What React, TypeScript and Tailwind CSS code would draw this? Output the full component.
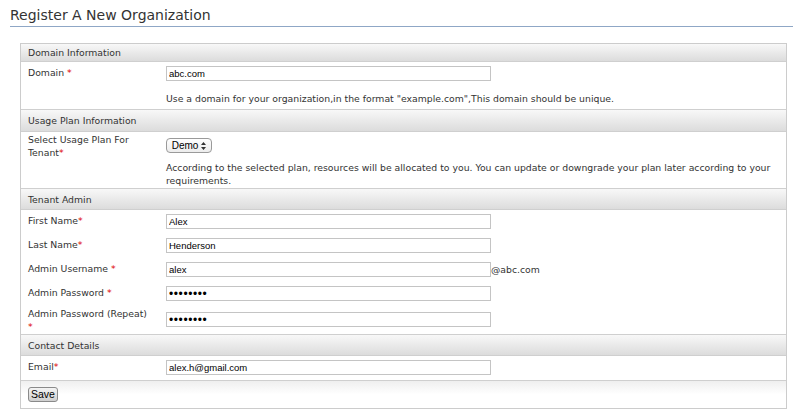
import React from 'react'

const labelFont = "font-['DejaVu_Sans',Verdana,sans-serif] text-[9.3px] leading-[13px] text-[#333]"
const inputCls =
  "block h-[15px] w-[325px] border border-[#c4c4c4] bg-white px-[2px] font-['Liberation_Sans',Arial,sans-serif] text-[9.5px] text-black outline-none"
const pwCls =
  "block h-[15px] w-[325px] border border-[#c4c4c4] bg-white px-[2px] font-['Liberation_Sans',Arial,sans-serif] text-[12px] tracking-[0.6px] text-black outline-none"

function Req() {
  return <span className="text-[#d00]">*</span>
}

function SectionHeader({ title, h }: { title: string; h: string }) {
  return (
    <div
      className={`flex items-center border-b border-[#cfcfcf] bg-gradient-to-b from-[#f8f8f8] to-[#dcdcdc] pl-[7px] ${h} ${labelFont}`}
    >
      {title}
    </div>
  )
}

function Field({ label, value, type = 'text', suffix }: { label: React.ReactNode; value: string; type?: string; suffix?: string }) {
  return (
    <div className="flex items-start">
      <div className={`w-[145px] shrink-0 pl-[7px] ${labelFont}`}>{label}</div>
      <input type={type} defaultValue={value} className={type === 'password' ? pwCls : inputCls} />
      {suffix && <span className={`${labelFont} leading-[15px]`}>{suffix}</span>}
    </div>
  )
}

export default function App() {
  return (
    <div className="h-[418px] w-[798px] overflow-hidden bg-white">
      <div className="ml-[10px] mr-[5px] pt-[6px]">
        <h1 className="border-b border-[#8fa7c6] pb-[1px] font-['DejaVu_Sans',Verdana,sans-serif] text-[14px] leading-[19px] text-[#333]">
          Register A New Organization
        </h1>
      </div>

      <div className="ml-[20px] mt-[16px] w-[767px] border border-[#cccccc]">
        <SectionHeader title="Domain Information" h="h-[18px]" />
        <div className="border-b border-[#cfcfcf] pb-[4px] pt-[4px]">
          <Field label={<>Domain <Req /></>} value="abc.com" />
          <p className={`ml-[145px] mt-[11px] ${labelFont}`}>
            Use a domain for your organization,in the format "example.com",This domain should be unique.
          </p>
        </div>

        <SectionHeader title="Usage Plan Information" h="h-[22px]" />
        <div className="flex border-b border-[#cfcfcf] pb-[1px] pt-[1px]">
          <div className={`w-[145px] shrink-0 pl-[7px] ${labelFont}`}>
            Select Usage Plan For
            <br />
            Tenant<Req />
          </div>
          <div className="pt-[5px]">
            <div className="flex h-[15px] w-[46px] items-center justify-center gap-[3px] rounded-[4px] border border-[#9a9a9a] bg-gradient-to-b from-white to-[#ececec] font-['Liberation_Sans',Arial,sans-serif] text-[10px] text-black">
              Demo
              <svg width="5" height="8" viewBox="0 0 5 8">
                <path d="M2.5 0 L5 3 L0 3 Z M2.5 8 L5 5 L0 5 Z" fill="#333" />
              </svg>
            </div>
            <p className={`mt-[8px] ${labelFont}`}>
              According to the selected plan, resources will be allocated to you. You can update or downgrade your plan later according to your
              <br />
              requirements.
            </p>
          </div>
        </div>

        <SectionHeader title="Tenant Admin" h="h-[21px]" />
        <div className="flex flex-col gap-[9px] border-b border-[#cfcfcf] pb-[1px] pt-[4px]">
          <Field label={<>First Name<Req /></>} value="Alex" />
          <Field label={<>Last Name<Req /></>} value="Henderson" />
          <Field label={<>Admin Username <Req /></>} value="alex" suffix="@abc.com" />
          <Field label={<>Admin Password <Req /></>} value="12345678" type="password" />
          <div className="-mt-[3px] flex items-start">
            <div className={`w-[145px] shrink-0 pl-[7px] ${labelFont}`}>
              Admin Password (Repeat)
              <br />
              <Req />
            </div>
            <input type="password" defaultValue="12345678" className={`mt-[5px] ${pwCls}`} />
          </div>
        </div>

        <SectionHeader title="Contact Details" h="h-[21px]" />
        <div className="border-b border-[#cfcfcf] pb-[5px] pt-[4px]">
          <Field label={<>Email<Req /></>} value="alex.h@gmail.com" />
        </div>

        <div className="bg-gradient-to-b from-[#efefef] via-white to-white pb-[6px] pl-[7px] pt-[6px]">
          <button className="block h-[15px] rounded-[3px] border border-[#8a8a8a] bg-gradient-to-b from-[#f4f4f4] to-[#cfcfcf] px-[2px] font-['Liberation_Sans',Arial,sans-serif] text-[10.5px] leading-[13px] text-black">
            Save
          </button>
        </div>
      </div>
    </div>
  )
}
